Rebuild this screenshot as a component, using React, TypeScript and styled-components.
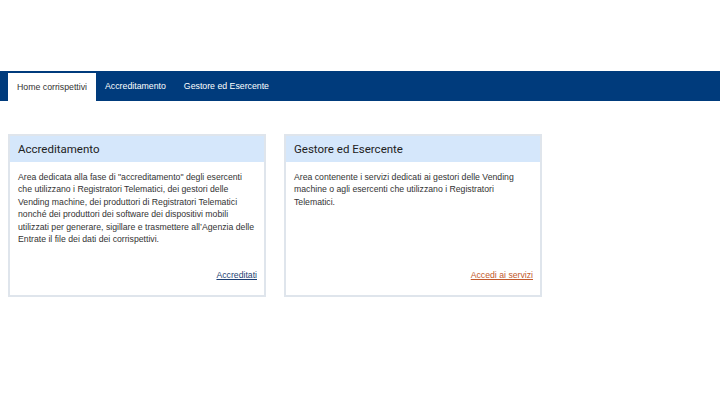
import styled, { createGlobalStyle } from "styled-components";

const GlobalStyle = createGlobalStyle`
  html, body {
    margin: 0;
    padding: 0;
    background: #fff;
    font-family: "Liberation Sans", Arial, sans-serif;
  }
`;

type CardData = {
  title: string;
  text: string;
  link: string;
  tone: "blue" | "orange";
};

const cards: CardData[] = [
  {
    title: "Accreditamento",
    text: "Area dedicata alla fase di \"accreditamento\" degli esercenti che utilizzano i Registratori Telematici, dei gestori delle Vending machine, dei produttori di Registratori Telematici nonché dei produttori dei software dei dispositivi mobili utilizzati per generare, sigillare e trasmettere all’Agenzia delle Entrate il file dei dati dei corrispettivi.",
    link: "Accreditati",
    tone: "blue",
  },
  {
    title: "Gestore ed Esercente",
    text: "Area contenente i servizi dedicati ai gestori delle Vending machine o agli esercenti che utilizzano i Registratori Telematici.",
    link: "Accedi ai servizi",
    tone: "orange",
  },
];

const tabs = ["Home corrispettivi", "Accreditamento", "Gestore ed Esercente"];

const App = () => {
  return (
    <Page>
      <GlobalStyle />
      <NavBar>
        {tabs.map((t, i) => (
          <Tab key={t} $active={i === 0}>
            {t}
          </Tab>
        ))}
      </NavBar>
      <Cards>
        {cards.map((c) => (
          <Card key={c.title}>
            <CardHeader>{c.title}</CardHeader>
            <CardBody>
              <Text>{c.text}</Text>
              <LinkRow>
                <CardLink href="#" $tone={c.tone}>
                  {c.link}
                </CardLink>
              </LinkRow>
            </CardBody>
          </Card>
        ))}
      </Cards>
    </Page>
  );
};

const Page = styled.div`
  padding-top: 71px;
  width: 720px;
  height: 405px;
  box-sizing: border-box;
`;

const NavBar = styled.nav`
  display: flex;
  align-items: flex-end;
  height: 30px;
  padding: 0 8px;
  background: #003b7c;
`;

const Tab = styled.div<{ $active?: boolean }>`
  display: flex;
  align-items: center;
  height: 28px;
  padding: 0 9px;
  font-size: 8.75px;
  color: ${(p) => (p.$active ? "#333" : "#fff")};
  background: ${(p) => (p.$active ? "#fff" : "transparent")};
  padding-bottom: ${(p) => (p.$active ? "0" : "2px")};
  box-sizing: border-box;
`;

const Cards = styled.div`
  display: flex;
  gap: 18px;
  padding: 33px 8px 0;
`;

const Card = styled.div`
  width: 258px;
  height: 163px;
  box-sizing: border-box;
  border: 2px solid #dfe5ec;
  display: flex;
  flex-direction: column;
`;

const CardHeader = styled.div`
  height: 26px;
  display: flex;
  align-items: center;
  padding: 0 8px;
  background: #d5e7fb;
  font-family: Roboto, "Noto Sans", sans-serif;
  font-size: 11.5px;
  color: #222;
`;

const CardBody = styled.div`
  flex: 1;
  display: flex;
  flex-direction: column;
  padding: 9px 7px 15px 8px;
`;

const Text = styled.p`
  margin: 0;
  font-size: 8.7px;
  line-height: 12.4px;
  color: #333;
`;

const LinkRow = styled.div`
  margin-top: auto;
  display: flex;
  justify-content: flex-end;
`;

const CardLink = styled.a<{ $tone: "blue" | "orange" }>`
  font-size: 8.7px;
  color: ${(p) => (p.$tone === "blue" ? "#1d3f73" : "#c25a2c")};
  text-decoration: underline;
`;

export default App;
